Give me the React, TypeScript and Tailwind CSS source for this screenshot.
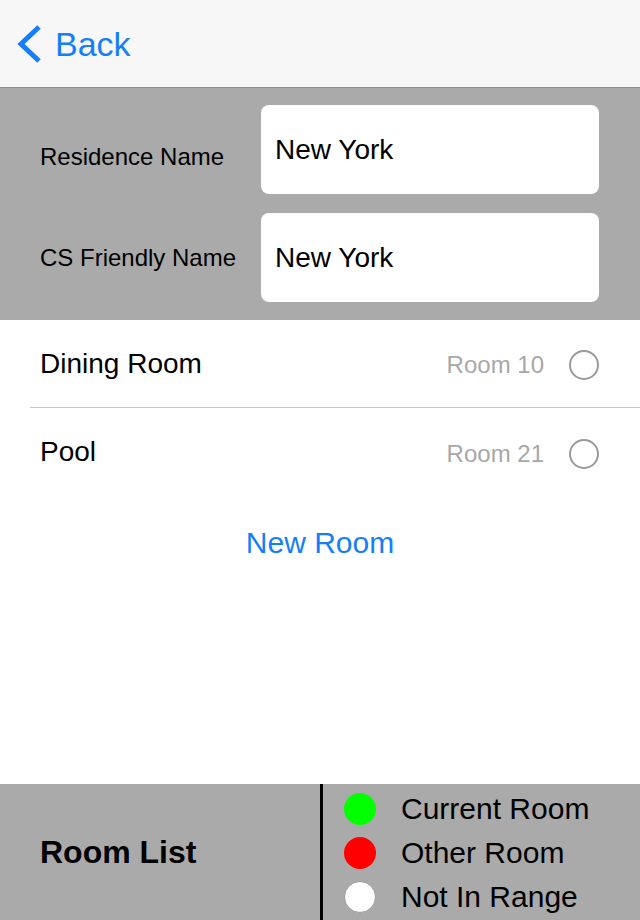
import React from 'react';

const rooms = [
  { name: 'Dining Room', label: 'Room 10' },
  { name: 'Pool', label: 'Room 21' },
];

const legend = [
  { color: 'bg-[#00ff00]', label: 'Current Room' },
  { color: 'bg-[#ff0000]', label: 'Other Room' },
  { color: 'bg-white border border-[#9a9a9a]', label: 'Not In Range' },
];

export default function App() {
  return (
    <div className="w-[640px] h-[920px] flex flex-col bg-white font-['Liberation_Sans',Arial,sans-serif] text-black overflow-hidden">
      {/* Nav bar */}
      <div className="h-[88px] shrink-0 bg-[#f7f7f7] border-b border-[#8f8f8f] flex items-center pl-[15px]">
        <svg width="28" height="40" viewBox="0 0 28 40" className="mt-[1px]">
          <path d="M 24 3 L 6 20 L 24 37" fill="none" stroke="#157efb" strokeWidth="5" strokeLinejoin="miter" />
        </svg>
        <span className="ml-[12px] text-[34px] text-[#157efb] leading-none">Back</span>
      </div>

      {/* Residence fields */}
      <div className="shrink-0 bg-[#aaaaaa] pt-[17px] pb-[18px] pr-[41px] flex flex-col gap-[19px]">
        <div className="flex items-center">
          <div className="w-[261px] pl-[40px] pt-[15px] text-[24px] leading-none">Residence Name</div>
          <div className="flex-1 h-[89px] bg-white rounded-[8px] flex items-center px-[14px] text-[28px]">New York</div>
        </div>
        <div className="flex items-center">
          <div className="w-[261px] pl-[40px] text-[24px] leading-none">CS Friendly Name</div>
          <div className="flex-1 h-[89px] bg-white rounded-[8px] flex items-center px-[14px] text-[28px]">New York</div>
        </div>
      </div>

      {/* Room rows */}
      <div className="flex-1 flex flex-col">
        {rooms.map((room, i) => (
          <div key={room.name} className="pl-[30px]">
            <div className={`h-[88px] flex items-center pl-[10px] pr-[41px] ${i === 0 ? 'border-b border-[#c8c7cc]' : ''}`}>
              <span className="flex-1 text-[28px] leading-none">{room.name}</span>
              <span className="text-[24px] text-[#a8a8a8] leading-none mt-[3px]">{room.label}</span>
              <span className="ml-[25px] mt-[3px] w-[30px] h-[30px] rounded-full border-2 border-[#9a9a9a]" />
            </div>
          </div>
        ))}
        <div className="mt-[32px] text-center text-[30px] text-[#157efb] leading-none">New Room</div>
      </div>

      {/* Footer legend */}
      <div className="h-[136px] shrink-0 bg-[#aaaaaa] flex">
        <div className="w-[320px] flex items-center pl-[40px]">
          <span className="text-[32px] font-bold leading-none">Room List</span>
        </div>
        <div className="w-[3px] bg-black" />
        <div className="flex-1 flex flex-col pt-[3px] pl-[21px]">
          {legend.map((item) => (
            <div key={item.label} className="h-[44px] flex items-center">
              <span className={`w-[32px] h-[32px] rounded-full ${item.color}`} />
              <span className="ml-[25px] text-[30px] leading-none">{item.label}</span>
            </div>
          ))}
        </div>
      </div>
    </div>
  );
}
